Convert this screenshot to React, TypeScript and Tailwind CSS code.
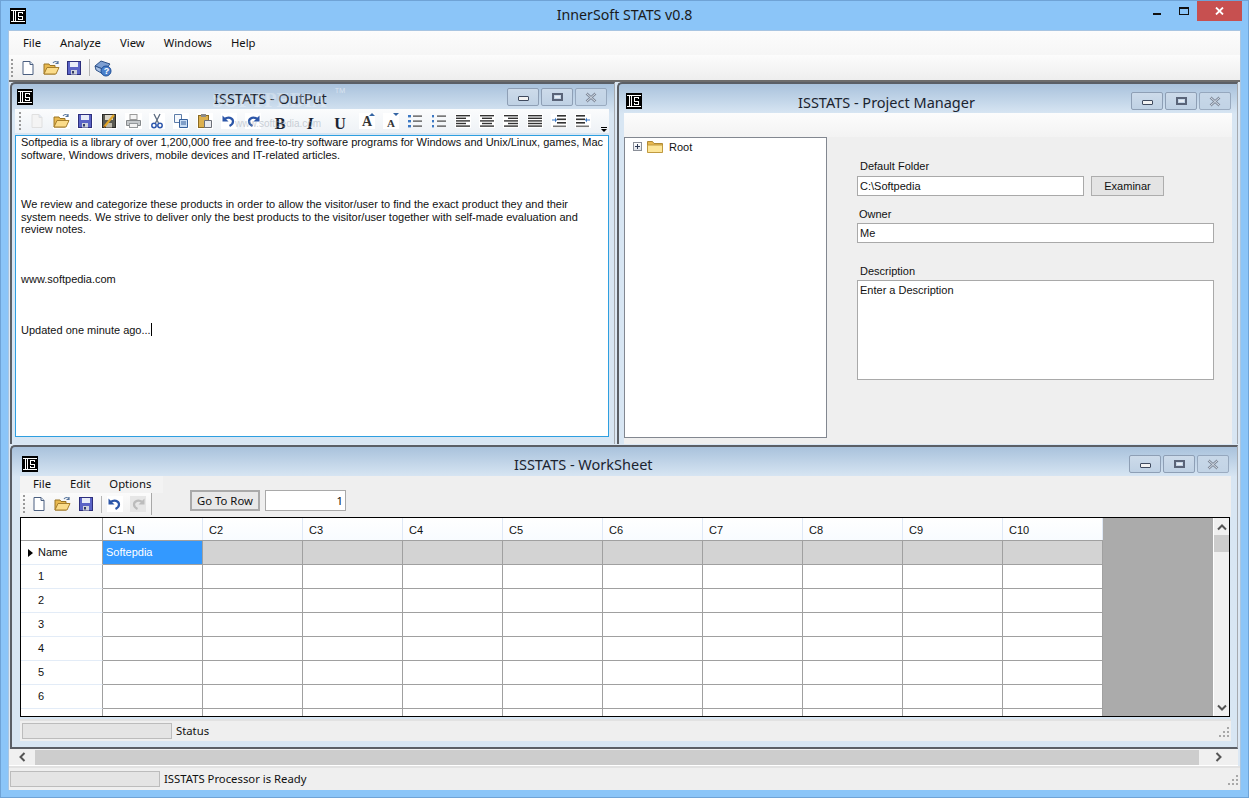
import React from 'react';

const ui = "font-['Noto_Sans','Open_Sans',sans-serif]";
const ms = "font-['Liberation_Sans',sans-serif]";

function Logo() {
  return (
    <svg width="16" height="16" viewBox="0 0 16 16" className="shrink-0" shapeRendering="crispEdges">
      <rect width="16" height="16" fill="#000" />
      <path d="M1 2.500h14M1 13.500h14M3.500 2v12M5.500 2v12" fill="none" stroke="#fff" strokeWidth="1" />
      <path d="M12.500 6V4.500h-4.500v4h4.500v3h-4.500V10" fill="none" stroke="#fff" strokeWidth="1" />
    </svg>
  );
}

function NewDoc({ faded }: { faded?: boolean }) {
  return (
    <svg width="16" height="16" viewBox="0 0 16 16">
      <path d="M3 1.500h7l3 3v10H3z" fill={faded ? '#f4f4f4' : '#fff'} stroke={faded ? '#e0e0e0' : '#4b5f80'} />
      <path d="M10 1.500v3h3" fill="#dfe8f5" stroke={faded ? '#e0e0e0' : '#4b5f80'} />
    </svg>
  );
}

function OpenFolder() {
  return (
    <svg width="17" height="16" viewBox="0 0 17 16">
      <path d="M1 14V4h5l1 1.500h5V14z" fill="#e9b94f" stroke="#9a7424" />
      <path d="M1 14l3-6.500h12L13 14z" fill="#fbdc8a" stroke="#a67e2c" />
      <path d="M10 3c1.500-2 3.500-2 5 0M15 1v2.500h-2.500" fill="none" stroke="#54739c" strokeWidth="1.200" />
    </svg>
  );
}

function Save() {
  return (
    <svg width="16" height="16" viewBox="0 0 16 16">
      <rect x="1.500" y="1.500" width="13" height="13" fill="#5a63c6" stroke="#2d2f7c" />
      <rect x="4" y="2" width="8" height="5" fill="#e8ecf8" />
      <rect x="5" y="10" width="6" height="4.500" fill="#cfd3dc" />
      <rect x="6" y="11" width="2" height="2.500" fill="#333a66" />
    </svg>
  );
}

function SaveEdit() {
  return (
    <svg width="16" height="16" viewBox="0 0 16 16">
      <rect x="1.500" y="1.500" width="13" height="13" fill="#5a5a52" stroke="#2b2b28" />
      <rect x="4" y="2" width="8" height="5" fill="#d9d4c6" />
      <rect x="5" y="10" width="6" height="4.500" fill="#bdb9ac" />
      <path d="M3 14L13 2" stroke="#e0a526" strokeWidth="2" />
      <path d="M3 14l1.500-.5L3.500 12.500z" fill="#8c2a16" />
    </svg>
  );
}

function Printer() {
  return (
    <svg width="17" height="16" viewBox="0 0 17 16">
      <rect x="5" y="1.500" width="7" height="5" fill="#f5f5f5" stroke="#9a9a9a" />
      <path d="M1.500 7.500h14v5h-14z" fill="#c5c9cc" stroke="#85898c" />
      <rect x="4.500" y="10.500" width="8" height="4" fill="#f3f3f3" stroke="#95999c" />
    </svg>
  );
}

function Cut() {
  return (
    <svg width="16" height="16" viewBox="0 0 16 16" fill="none">
      <path d="M5 1l4.500 9M11 1L6.500 10" stroke="#5b6b80" strokeWidth="1.300" />
      <circle cx="5" cy="12.500" r="2.200" stroke="#2f58ad" strokeWidth="1.500" />
      <circle cx="11" cy="12.500" r="2.200" stroke="#2f58ad" strokeWidth="1.500" />
    </svg>
  );
}

function Copy() {
  return (
    <svg width="16" height="16" viewBox="0 0 16 16">
      <path d="M1.500 1.500h7v8h-7z" fill="#f5f8fc" stroke="#5d7ca8" />
      <path d="M6.500 6.500h8v8h-8z" fill="#c9dcf3" stroke="#36609c" />
      <path d="M8 9h5M8 11h5" stroke="#36609c" />
    </svg>
  );
}

function Paste() {
  return (
    <svg width="16" height="16" viewBox="0 0 16 16">
      <rect x="1.500" y="2.500" width="10" height="12" fill="#dcb04e" stroke="#8a6a22" />
      <rect x="4" y="1" width="5" height="3" fill="#8a8a8a" />
      <path d="M7.500 7.500h7v7h-7z" fill="#e8eaee" stroke="#6b6f78" />
    </svg>
  );
}

function Undo({ gray }: { gray?: boolean }) {
  const c = gray ? '#bcbcbc' : '#2c56a8';
  return (
    <svg width="16" height="16" viewBox="0 0 16 16" fill="none">
      <path d="M3.500 6c3.500-2.500 8.500-1.500 8.500 2.500 0 2-1.500 3.500-3.500 4.500" stroke={c} strokeWidth="2.200" />
      <path d="M1.500 2.500v6h6z" fill={c} />
    </svg>
  );
}

function Redo({ gray }: { gray?: boolean }) {
  return (
    <span className="-scale-x-100 flex">
      <Undo gray={gray} />
    </span>
  );
}

function HelpBook() {
  return (
    <svg width="18" height="18" viewBox="0 0 18 18">
      <path d="M1 7l6-5 9 3-5 6z" fill="#7d9fd2" stroke="#2f5389" />
      <path d="M1 7l1 4 7 4 2-4z" fill="#a9c1e4" stroke="#2f5389" />
      <circle cx="12" cy="12" r="5" fill="#4a80cb" stroke="#1e4f98" />
      <text x="9.700" y="15.200" fontSize="9" fontWeight="700" fill="#fff" fontFamily="Liberation Sans">?</text>
    </svg>
  );
}

function Grip() {
  return <div className="h-[18px] w-[2px] mx-[1px] border-l-2 border-dotted border-[#9a9a9a]" />;
}

function FontSize({ up }: { up?: boolean }) {
  return (
    <span className="relative w-[16px] h-[16px] bg-white flex items-end justify-center font-['Liberation_Serif',serif] font-bold text-[#333] leading-none">
      <span className={up ? 'text-[14px]' : 'text-[11px]'}>A</span>
      <span className={`absolute right-0 top-0 w-0 h-0 border-x-[3px] border-x-transparent ${up ? 'border-b-[3px] border-b-[#3465a4]' : 'border-t-[3px] border-t-[#3465a4]'}`} />
    </span>
  );
}

function Lines({ kind }: { kind: 'left' | 'center' | 'right' | 'justify' }) {
  const rows = [14, 10, 14, 10, 14];
  return (
    <svg width="16" height="14" viewBox="0 0 16 14" className="bg-white">
      {rows.map((w, i) => {
        const len = kind === 'justify' ? 14 : w;
        const x = kind === 'left' || kind === 'justify' ? 1 : kind === 'right' ? 15 - len : 8 - len / 2;
        return <rect key={i} x={x} y={1 + i * 2.6} width={len} height="1.400" fill="#333" />;
      })}
    </svg>
  );
}

function ListIcon({ numbered }: { numbered?: boolean }) {
  return (
    <svg width="16" height="14" viewBox="0 0 16 14">
      {[1, 6, 11].map((y) => (
        <g key={y}>
          <rect x="1" y={y} width={numbered ? 2 : 3} height="2.400" fill="#3b78c4" />
          <rect x="6" y={y + 0.5} width="9" height="1.200" fill="#444" />
        </g>
      ))}
    </svg>
  );
}

function Indent({ flip }: { flip?: boolean }) {
  return (
    <span className={flip ? '-scale-x-100 flex bg-white' : 'flex bg-white'}>
      <svg width="16" height="14" viewBox="0 0 16 14">
        <rect x="6" y="1" width="9" height="1.600" fill="#333" />
        <rect x="6" y="4.500" width="9" height="1.600" fill="#333" />
        <rect x="6" y="8" width="9" height="1.600" fill="#333" />
        <rect x="2" y="11.500" width="13" height="1.600" fill="#777" />
        <path d="M1 5.500h3V3.500l2 2.500-2 2.500v-2H1z" fill="#3b78c4" />
      </svg>
    </span>
  );
}

function CaptionButtons() {
  const btn = 'w-[32px] h-[18px] rounded-[2px] border border-[#8e9fb5] bg-gradient-to-b from-[#cddbea] to-[#bfd1e4] flex items-center justify-center';
  return (
    <div className="flex gap-[2px]">
      <div className={btn}>
        <div className="w-[11px] h-[5px] mt-[2px] bg-[#f2f2f2] border border-[#3f4a5e] rounded-[1px]" />
      </div>
      <div className={btn}>
        <div className="w-[11px] h-[8px] border-2 border-[#5a6478] flex items-center justify-center">
          <div className="w-[5px] h-[2px] bg-[#e8edf4]" />
        </div>
      </div>
      <div className={`${btn} opacity-80`}>
        <svg width="14" height="11" viewBox="0 0 14 11">
          <path d="M2.500 1.500l9 8M11.500 1.500l-9 8" stroke="#6f7787" strokeWidth="2.600" />
          <path d="M2.500 1.500l9 8M11.500 1.500l-9 8" stroke="#e8edf4" strokeWidth="0.900" />
        </svg>
      </div>
    </div>
  );
}

interface MdiWindowProps {
  title: string;
  barClass: string;
  titleClass: string;
  className: string;
  children: React.ReactNode;
}

function MdiWindow({ title, barClass, titleClass, className, children }: MdiWindowProps) {
  return (
    <div className={`${className} relative flex flex-col border-t-2 border-l-2 border-[#5b5f66] border-r border-r-[#a5a9ae] bg-gradient-to-b from-[#a9c2dc] to-[#d8e6f3] to-[30px] rounded-tl-[5px] overflow-hidden`}>
      <div className={`${barClass} shrink-0 flex items-start relative`}>
        <Logo />
        <div className={`absolute ${titleClass} text-[14.500px] leading-[22px] text-[#1b2430] ${ui}`}>{title}</div>
        <div className="ml-auto -mt-px">
          <CaptionButtons />
        </div>
      </div>
      {children}
    </div>
  );
}

function Tool({ wide, children }: { wide?: boolean; children: React.ReactNode }) {
  return <div className={`${wide ? 'w-[30px]' : 'w-[24px]'} shrink-0 flex justify-center items-center`}>{children}</div>;
}

function White({ children }: { children: React.ReactNode }) {
  return <div className="bg-white flex">{children}</div>;
}

function OutputToolbar() {
  const letter = "mt-[5px] font-['Liberation_Serif',serif] font-bold text-[16px] leading-none text-[#1a2433]";
  return (
    <div className="h-[24px] shrink-0 ml-[3px] mr-[5px] bg-gradient-to-b from-[#fbfcfd] to-[#eef2f6] flex items-center pl-[3px] relative">
      <Grip />
      <div className="flex items-center ml-[3px]">
        <Tool><NewDoc faded /></Tool>
        <Tool><White><OpenFolder /></White></Tool>
        <Tool><White><Save /></White></Tool>
        <Tool><White><SaveEdit /></White></Tool>
        <Tool><White><Printer /></White></Tool>
        <Tool><White><Cut /></White></Tool>
        <Tool><White><Copy /></White></Tool>
        <Tool><White><Paste /></White></Tool>
        <Tool><White><Undo /></White></Tool>
        <Tool><White><Redo /></White></Tool>
        <Tool wide><span className={letter}>B</span></Tool>
        <Tool wide><span className={`${letter} italic`}>I</span></Tool>
        <Tool wide><span className={letter}>U</span></Tool>
        <Tool><FontSize up /></Tool>
        <Tool><FontSize /></Tool>
        <Tool><ListIcon /></Tool>
        <Tool><ListIcon numbered /></Tool>
        <Tool><Lines kind="left" /></Tool>
        <Tool><Lines kind="center" /></Tool>
        <Tool><Lines kind="right" /></Tool>
        <Tool><Lines kind="justify" /></Tool>
        <Tool><Indent /></Tool>
        <Tool><Indent flip /></Tool>
      </div>
      <div className="absolute right-[2px] bottom-[1px] flex flex-col items-center gap-[1px]">
        <div className="w-[6px] h-px bg-black" />
        <div className="w-0 h-0 border-x-[3px] border-x-transparent border-t-[3px] border-t-black" />
      </div>
    </div>
  );
}

function OutputText() {
  return (
    <div className={`ml-[3px] mr-[5px] mt-[2px] h-[302px] border border-[#2e9fe0] bg-white pl-[5px] ${ms} text-[11px] leading-[12.500px] text-[#111] overflow-hidden whitespace-nowrap`}>
      <p>
        Softpedia is a library of over 1,200,000 free and free-to-try software programs for Windows and Unix/Linux, games, Mac<br />
        software, Windows drivers, mobile devices and IT-related articles.
      </p>
      <p className="mt-[37px]">
        We review and categorize these products in order to allow the visitor/user to find the exact product they and their<br />
        system needs. We strive to deliver only the best products to the visitor/user together with self-made evaluation and<br />
        review notes.
      </p>
      <p className="mt-[37.500px]">www.softpedia.com</p>
      <p className="mt-[37.500px]">
        Updated one minute ago...<span className="inline-block w-px h-[13px] bg-black align-[-2px]" />
      </p>
    </div>
  );
}

function Watermark() {
  return (
    <>
      <div className="absolute left-[200px] top-[3px] font-['Liberation_Serif',serif] font-bold text-[20px] leading-[26px] text-white/30">SOFTPEDIA</div>
      <div className="absolute left-[323px] top-[3px] text-[7px] leading-[8px] text-white/50">TM</div>
      <div className="absolute left-[223px] top-[33px] font-['Liberation_Sans',sans-serif] text-[10px] leading-[14px] text-[#9aa4b0]/50">www.softpedia.com</div>
    </>
  );
}

function Field({ value }: { value: string }) {
  return <div className="h-[20px] border border-[#a9a9a9] bg-white pl-[2px] leading-[18px]">{value}</div>;
}

function ProjectBody() {
  return (
    <div className={`flex flex-1 min-h-0 mx-[5px] ${ms} text-[11px] text-[#111]`}>
      <div className="flex-1 flex flex-col min-w-0">
        <div className="h-[24px] bg-gradient-to-b from-[#fcfcfc] to-[#f3f3f3]" />
        <div className="flex-1 flex bg-[#efefef] pb-[6px]">
          <div className="w-[203px] shrink-0 border border-[#828790] bg-white flex items-start pt-[1px] pl-[8px] gap-[3px]">
            <div className="mt-[3px] w-[9px] h-[9px] border border-[#8a8f98] flex items-center justify-center relative bg-gradient-to-b from-white to-[#dfe2e8]">
              <div className="w-[5px] h-px bg-[#2f3b55]" />
              <div className="absolute w-px h-[5px] bg-[#2f3b55]" />
            </div>
            <svg width="18" height="15" viewBox="0 0 18 15" className="ml-[1px]">
              <path d="M1.500 13V2.500h5l1.500 2h8.500V13z" fill="#e8b84f" stroke="#b08a35" />
              <path d="M1.500 13.500V6h15v7.500z" fill="#fde69a" stroke="#c09a40" />
            </svg>
            <span className="ml-[2px] leading-[16px]">Root</span>
          </div>
          <div className="flex-1 pl-[30px] pr-[18px] pt-[21px] flex flex-col leading-[16px]">
            <div className="pl-[3px]">Default Folder</div>
            <div className="flex items-center gap-[7px] mt-[2px]">
              <div className="w-[227px]"><Field value="C:\Softpedia" /></div>
              <div className="w-[73px] h-[20px] border border-[#adadad] bg-[#e4e4e4] text-center leading-[18px]">Examinar</div>
            </div>
            <div className="pl-[2px] mt-[10px]">Owner</div>
            <div className="mt-px"><Field value="Me" /></div>
            <div className="pl-[3px] mt-[20px]">Description</div>
            <div className="mt-px h-[100px] border border-[#a9a9a9] bg-white pl-[2px] leading-[18px]">Enter a Description</div>
          </div>
        </div>
      </div>
    </div>
  );
}

const columns = ['C1-N', 'C2', 'C3', 'C4', 'C5', 'C6', 'C7', 'C8', 'C9', 'C10'];
const rowLabels = ['1', '2', '3', '4', '5', '6', ''];

function Chevron({ dir }: { dir: 'up' | 'down' | 'left' | 'right' }) {
  const rotate = { up: 'rotate-0', down: 'rotate-180', left: '-rotate-90', right: 'rotate-90' }[dir];
  return (
    <svg width="10" height="8" viewBox="0 0 10 8" className={rotate}>
      <path d="M1 6.500l4-4 4 4" fill="none" stroke="#555" strokeWidth="2" />
    </svg>
  );
}

function Grid() {
  const cell = 'w-[100px] shrink-0 border-r border-b border-[#a0a0a0]';
  return (
    <div className={`h-[200px] border border-black flex bg-[#ababab] overflow-hidden ${ms} text-[11px] text-[#111] mr-px`}>
      <div className="flex flex-col">
        <div className="flex h-[22px] shrink-0">
          <div className="w-[82px] shrink-0 bg-white border-r border-[#a0a0a0]" />
          {columns.map((c) => (
            <div key={c} className="w-[100px] shrink-0 bg-gradient-to-b from-white to-[#f8fbff] border-r border-[#dfe8f5] pl-[6px] leading-[24px]">{c}</div>
          ))}
        </div>
        <div className="flex h-[25px] shrink-0 border-t border-[#a0a0a0]">
          <div className="w-[82px] shrink-0 bg-white border-r border-b border-[#a0a0a0] border-b-[#e3ecf7] flex items-center pl-[7px]">
            <div className="w-0 h-0 border-y-[4px] border-y-transparent border-l-[5px] border-l-black" />
            <span className="ml-[5px]">Name</span>
          </div>
          <div className={`${cell} bg-[#3399ff] text-white pl-[3px] leading-[23px]`}>Softepdia</div>
          {columns.slice(1).map((c) => (
            <div key={c} className={`${cell} bg-[#d3d3d3]`} />
          ))}
        </div>
        {rowLabels.map((r, i) => (
          <div key={i} className="flex h-[24px] shrink-0">
            <div className="w-[82px] shrink-0 bg-white border-r border-[#a0a0a0] border-b border-b-[#e3ecf7] pl-[17px] leading-[23px]">{r}</div>
            {columns.map((c) => (
              <div key={c} className={`${cell} bg-white`} />
            ))}
          </div>
        ))}
      </div>
      <div className="flex-1" />
      <div className="w-[16px] shrink-0 bg-[#f0f0f0] flex flex-col items-center border-l border-white">
        <div className="h-[17px] flex items-center"><Chevron dir="up" /></div>
        <div className="w-[15px] h-[17px] bg-[#cdcdcd]" />
        <div className="flex-1" />
        <div className="h-[17px] flex items-center"><Chevron dir="down" /></div>
      </div>
    </div>
  );
}

function ResizeGrip() {
  return (
    <svg width="11" height="11" viewBox="0 0 11 11" className="shrink-0">
      <g fill="#a8a8a8">
        <rect x="8" y="0" width="2" height="2" />
        <rect x="4" y="4" width="2" height="2" />
        <rect x="8" y="4" width="2" height="2" />
        <rect x="0" y="8" width="2" height="2" />
        <rect x="4" y="8" width="2" height="2" />
        <rect x="8" y="8" width="2" height="2" />
      </g>
    </svg>
  );
}

function WorksheetBody() {
  return (
    <div className={`ml-[8px] mr-[6px] flex flex-col ${ui}`}>
      <div className="bg-[#efefef] relative">
        <div className="h-[17px] w-[143px] bg-[#f3f3f3] flex items-center text-[11.300px] text-[#111] pl-[13px] gap-[19px]">
          <span>File</span>
          <span>Edit</span>
          <span>Options</span>
        </div>
        <div className="h-[24px] flex items-start">
          <div className="h-[22px] w-[132px] flex items-center bg-gradient-to-b from-[#fbfbfb] to-[#f1f1f1] pl-[2px] border-r border-[#a8a8a8] gap-[7px]">
            <Grip />
            <div className="-ml-[2px] flex"><NewDoc /></div>
            <OpenFolder />
            <Save />
            <div className="h-[17px] w-px bg-[#b5b5b5]" />
            <div className="-ml-[2px] flex bg-white"><Undo /></div>
            <div className="flex bg-[#e6e6e6]"><Redo gray /></div>
          </div>
          <div className="ml-[38px] -mt-[3px] w-[70px] h-[21px] border-2 border-[#a9a9a9] bg-[#e8e8e8] text-[11.300px] text-[#111] text-center leading-[17px]">Go To Row</div>
          <div className="ml-[5px] -mt-[3px] w-[81px] h-[21px] border border-[#a9a9a9] bg-white text-[11.300px] text-right pr-[2px] leading-[19px] text-[#111]">1</div>
        </div>
      </div>
      <Grid />
      <div className="h-[22px] bg-[#efefef] border-t-2 border-[#e2e2e2] mt-[2px] flex items-center pl-[2px] text-[11.300px] text-[#111]">
        <div className="w-[150px] h-[16px] bg-[#e4e4e4] border border-[#bcbcbc]" />
        <span className="ml-[4px]">Status</span>
        <div className="ml-auto mr-px mt-[3px]"><ResizeGrip /></div>
      </div>
    </div>
  );
}

export default function App() {
  return (
    <div className={`w-[1249px] h-[798px] bg-[#8bc5f8] border border-[#6fa3d6] flex flex-col overflow-hidden ${ui}`}>
      <div className="h-[29px] shrink-0 relative flex items-center pl-[9px]">
        <Logo />
        <div className="absolute left-0 right-0 top-[4px] text-center text-[14.200px] leading-[20px] text-[#1a1a1a]">InnerSoft STATS v0.8</div>
        <div className="ml-auto flex items-start self-start mr-[6px]">
          <div className="w-[8px] h-[2px] bg-[#111] mt-[12px] mr-[18px]" />
          <div className="w-[10px] h-[8px] border border-[#111] border-t-2 mt-[6px] mr-[8px]" />
          <div className="w-[45px] h-[20px] bg-[#c75050] flex items-center justify-center">
            <svg width="9" height="8" viewBox="0 0 9 8">
              <path d="M1 .5l7 7M8 .5l-7 7" stroke="#fff" strokeWidth="1.800" />
            </svg>
          </div>
        </div>
      </div>
      <div className="mx-[7px] w-[1233px] flex-1 min-h-0 flex flex-col bg-[#f0f0f0] border border-[#a8c5e2] border-b-0">
        <div className="h-[24px] shrink-0 bg-gradient-to-b from-[#fcfcfc] to-[#f6f6f6] flex items-center pl-[14px] gap-[19px] text-[11.300px] text-[#111]">
          <span>File</span>
          <span>Analyze</span>
          <span>View</span>
          <span>Windows</span>
          <span>Help</span>
        </div>
        <div className="h-[25px] shrink-0 bg-gradient-to-b from-[#fcfcfc] to-[#eeeeee] flex items-center pl-px">
          <Grip />
          <div className="ml-[6px] flex"><NewDoc /></div>
          <div className="ml-[7px] flex"><OpenFolder /></div>
          <div className="ml-[6px] flex"><Save /></div>
          <div className="ml-[7px] h-[17px] w-px bg-[#b5b5b5]" />
          <div className="ml-[4px] flex"><HelpBook /></div>
        </div>
        <div className="flex-1 min-h-0 flex flex-col border-t-2 border-[#6d6d6d] bg-[#dce8f4]">
          <div className="h-[362px] shrink-0 flex">
            <MdiWindow title="ISSTATS - OutPut" barClass="h-[25px] pt-[5px] pl-[5px] pr-[7px]" titleClass="left-[202px] top-[3px]" className="w-[605px] ml-px">
              <OutputToolbar />
              <OutputText />
              <Watermark />
            </MdiWindow>
            <MdiWindow title="ISSTATS - Project Manager" barClass="h-[29px] pt-[9px] pl-[7px] pr-[6px]" titleClass="left-[179px] top-[7px]" className="w-[621px] ml-[2px]">
              <ProjectBody />
            </MdiWindow>
          </div>
          <div className="h-[304px] shrink-0 mt-px">
            <MdiWindow title="ISSTATS - WorkSheet" barClass="h-[29px] pt-[9px] pl-[10px] pr-[8px]" titleClass="left-[502px] top-[6px]" className="w-[1228px] h-[304px] ml-px border-b-2 border-b-[#5b5f66]">
              <WorksheetBody />
            </MdiWindow>
          </div>
          <div className="h-[17px] shrink-0 bg-[#f0f0f0] flex items-center mr-[2px] border-b border-white">
            <div className="w-[26px] flex justify-center"><Chevron dir="left" /></div>
            <div className="w-[1164px] h-[15px] bg-[#cdcdcd]" />
            <div className="flex-1 flex justify-center"><Chevron dir="right" /></div>
          </div>
        </div>
        <div className="h-[24px] shrink-0 bg-[#efefef] border-t-2 border-[#e2e2e2] flex items-center pl-px text-[11.300px] text-[#111]">
          <div className="w-[150px] h-[16px] bg-[#e4e4e4] border border-[#bcbcbc]" />
          <span className="ml-[4px]">ISSTATS Processor is Ready</span>
          <div className="ml-auto mr-px mt-[3px]"><ResizeGrip /></div>
        </div>
      </div>
      <div className="h-[7px] shrink-0" />
    </div>
  );
}
